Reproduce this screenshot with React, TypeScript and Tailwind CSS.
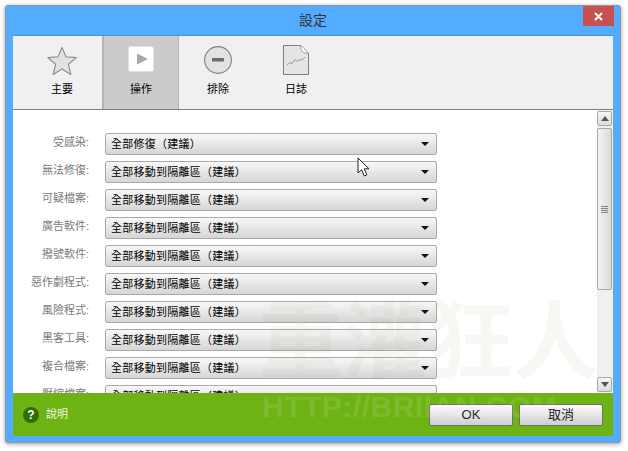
const font = "font-['Liberation_Sans','Noto_Sans_CJK_TC',sans-serif]"

const rows = [
  { label: "受感染:", value: "全部修復（建議）" },
  { label: "無法修復:", value: "全部移動到隔離區（建議）" },
  { label: "可疑檔案:", value: "全部移動到隔離區（建議）" },
  { label: "廣告軟件:", value: "全部移動到隔離區（建議）" },
  { label: "撥號軟件:", value: "全部移動到隔離區（建議）" },
  { label: "惡作劇程式:", value: "全部移動到隔離區（建議）" },
  { label: "風險程式:", value: "全部移動到隔離區（建議）" },
  { label: "黑客工具:", value: "全部移動到隔離區（建議）" },
  { label: "複合檔案:", value: "全部移動到隔離區（建議）" },
  { label: "壓縮檔案:", value: "全部移動到隔離區（建議）" },
]

function StarIcon() {
  return (
    <svg width="30" height="30" viewBox="0 0 32 32">
      <path d="M16 1.5l4.2 10 11 .9-8.4 7.1 2.6 10.8-9.4-5.7-9.4 5.7 2.6-10.8-8.4-7.1 11-.9z" fill="#e2e2e2" stroke="#8c8c8c" strokeWidth="1.2" strokeLinejoin="round" />
    </svg>
  )
}

function PlayIcon() {
  return (
    <svg width="26" height="26" viewBox="0 0 26 26">
      <rect x="0.5" y="0.5" width="25" height="25" rx="2" fill="#ffffff" stroke="#e0e0e0" />
      <path d="M9 7.5l11 5.5-11 5.5z" fill="#a8a8a8" />
    </svg>
  )
}

function MinusIcon() {
  return (
    <svg width="28" height="28" viewBox="0 0 28 28">
      <circle cx="14" cy="14" r="13.4" fill="#e2e2e2" stroke="#808080" strokeWidth="1.1" />
      <rect x="8" y="12" width="12" height="3.4" rx="0.6" fill="#6b6b6b" />
    </svg>
  )
}

function LogIcon() {
  return (
    <svg className="-mt-px" width="26" height="30" viewBox="0 0 26 30">
      <path d="M.5.5h17l8 8v21H.5z" fill="#e4e4e4" stroke="#808080" strokeLinejoin="round" />
      <path d="M17.5.5c0 5 2 8 8 8l-5-6z" fill="#fafafa" stroke="#a0a0a0" />
      <path d="M4 20l3-2.5 2 1 3-4 2 2 3-2 2 .5 3-3" fill="none" stroke="#8e8e8e" strokeWidth="0.9" />
    </svg>
  )
}

function Tab({ icon, label, active }: { icon: React.ReactNode; label: string; active?: boolean }) {
  return (
    <div className={`flex h-full flex-col items-center pt-[10px] ${active ? "ml-px w-[77px] border-l-2 border-r border-[#b3b3b3] bg-[#cbcbcb]" : "w-[78px]"}`}>
      <div className="flex h-[31px] items-start justify-center">{icon}</div>
      <div className="mt-[4px] text-[11px] leading-[16px] text-black">{label}</div>
    </div>
  )
}

function SettingRow({ label, value }: { label: string; value: string }) {
  return (
    <div className="flex h-[22px] items-center">
      <div className="w-[76px] shrink-0 pb-[5px] text-right text-[11px] leading-[14px] text-[#7b7b7b]">{label}</div>
      <div className="ml-[16px] flex h-[22px] w-[332px] shrink-0 items-center justify-between rounded-[2px] border border-[#a9a9a9] bg-gradient-to-b from-[#f8f8f8] to-[#d6d6d6] pl-[5px] pr-[7px]">
        <span className="text-[11px] tracking-[0.25px] text-black">{value}</span>
        <svg width="8" height="4" viewBox="0 0 8 4"><path d="M0 0h8L4 4z" fill="#111111" /></svg>
      </div>
    </div>
  )
}

function ScrollButton({ up }: { up?: boolean }) {
  return (
    <div className="flex h-[15px] w-[15px] items-center justify-center rounded-[2px] border border-[#a8a8a8] bg-gradient-to-b from-[#f6f6f6] to-[#dcdcdc]">
      <svg width="8" height="5" viewBox="0 0 8 5">
        <path d={up ? "M4 0l4 5H0z" : "M0 0h8L4 5z"} fill="#555555" />
      </svg>
    </div>
  )
}

function Scrollbar() {
  return (
    <div className="flex w-[16px] shrink-0 flex-col items-start gap-[2px] bg-[#f0f0f0] pb-[1px] pt-[1px]">
      <ScrollButton up />
      <div className="flex h-[162px] w-[15px] items-center justify-center rounded-[2px] border border-[#a8a8a8] bg-gradient-to-r from-[#f4f4f4] to-[#dadada]">
        <div className="flex flex-col gap-[1px]">
          <div className="h-px w-[7px] bg-[#808080]" />
          <div className="h-px w-[7px] bg-[#808080]" />
          <div className="h-px w-[7px] bg-[#808080]" />
          <div className="h-px w-[7px] bg-[#808080]" />
        </div>
      </div>
      <div className="flex-1" />
      <ScrollButton />
    </div>
  )
}

function FooterButton({ label }: { label: string }) {
  return (
    <div className="flex h-[22px] w-[84px] items-center justify-center rounded-[2px] border border-[#6f6f6f] bg-gradient-to-b from-[#fbfbfb] to-[#cfcfcf] text-[13px] text-[#222222]">
      {label}
    </div>
  )
}

export default function App() {
  return (
    <div className={`${font} h-[451px] w-[628px] overflow-hidden bg-white pl-[5px] pt-[5px]`}>
      <div className="relative flex h-[438px] w-[616px] flex-col rounded-[3px] border border-[#8a98a8] bg-[#53acff] px-[7px] pb-[6px] shadow-[0_1px_4px_rgba(0,0,0,0.4)]">
        {/* title bar */}
        <div className="relative flex h-[29px] shrink-0 items-center justify-center text-[14px] text-[#333333]">
          設定
          <div className="absolute right-[-1px] top-0 flex h-[20px] w-[31px] items-center justify-center bg-[#c75050]">
            <svg width="9" height="9" viewBox="0 0 9 9">
              <path d="M1 1l7 7M8 1l-7 7" stroke="#ffffff" strokeWidth="2" />
            </svg>
          </div>
        </div>

        <div className="flex min-h-0 flex-1 flex-col border-t border-[#4a90d0]">
          {/* toolbar */}
          <div className="flex h-[74px] shrink-0 border-b border-[#808080] bg-[#f0f0f0] pl-[10px]">
            <Tab icon={<StarIcon />} label="主要" />
            <Tab icon={<PlayIcon />} label="操作" active />
            <Tab icon={<MinusIcon />} label="排除" />
            <Tab icon={<LogIcon />} label="日誌" />
          </div>

          {/* settings list */}
          <div className="flex min-h-0 flex-1 overflow-hidden bg-white">
            <div className="flex flex-1 flex-col gap-[6px] pt-[23px]">
              {rows.map((row) => (
                <SettingRow key={row.label} label={row.label} value={row.value} />
              ))}
            </div>
            <Scrollbar />
          </div>

          {/* footer */}
          <div className="flex h-[43px] shrink-0 items-center bg-[#6db314] pl-[10px] pr-[10px]">
            <div className="flex h-[16px] w-[16px] items-center justify-center rounded-full bg-[#2f6d06] text-[12px] font-bold text-white">?</div>
            <div className="ml-[7px] text-[11px] text-[#eef6df]">說明</div>
            <div className="flex-1" />
            <div className="flex gap-[6px]">
              <FooterButton label="OK" />
              <FooterButton label="取消" />
            </div>
          </div>
        </div>

        {/* watermark */}
        <div className="pointer-events-none absolute left-[252px] top-[292px] whitespace-nowrap text-[85px] font-bold leading-[90px] text-[#8a7a3a] opacity-[0.05]">重灌狂人</div>
        <div className="pointer-events-none absolute left-[256px] top-[386px] whitespace-nowrap text-[30px] font-bold leading-[30px] tracking-[0.5px] text-[#ffffff] opacity-[0.1]">HTTP://BRIIAN.COM</div>

        {/* mouse cursor */}
        <svg className="pointer-events-none absolute left-[351px] top-[151px]" width="14" height="21" viewBox="0 0 14 21">
          <path d="M1 1v15l3.6-3.3 2.6 6.3 2.6-1.1-2.6-6.1H12z" fill="#ffffff" stroke="#222222" strokeWidth="1" strokeLinejoin="round" />
        </svg>
      </div>
    </div>
  )
}
